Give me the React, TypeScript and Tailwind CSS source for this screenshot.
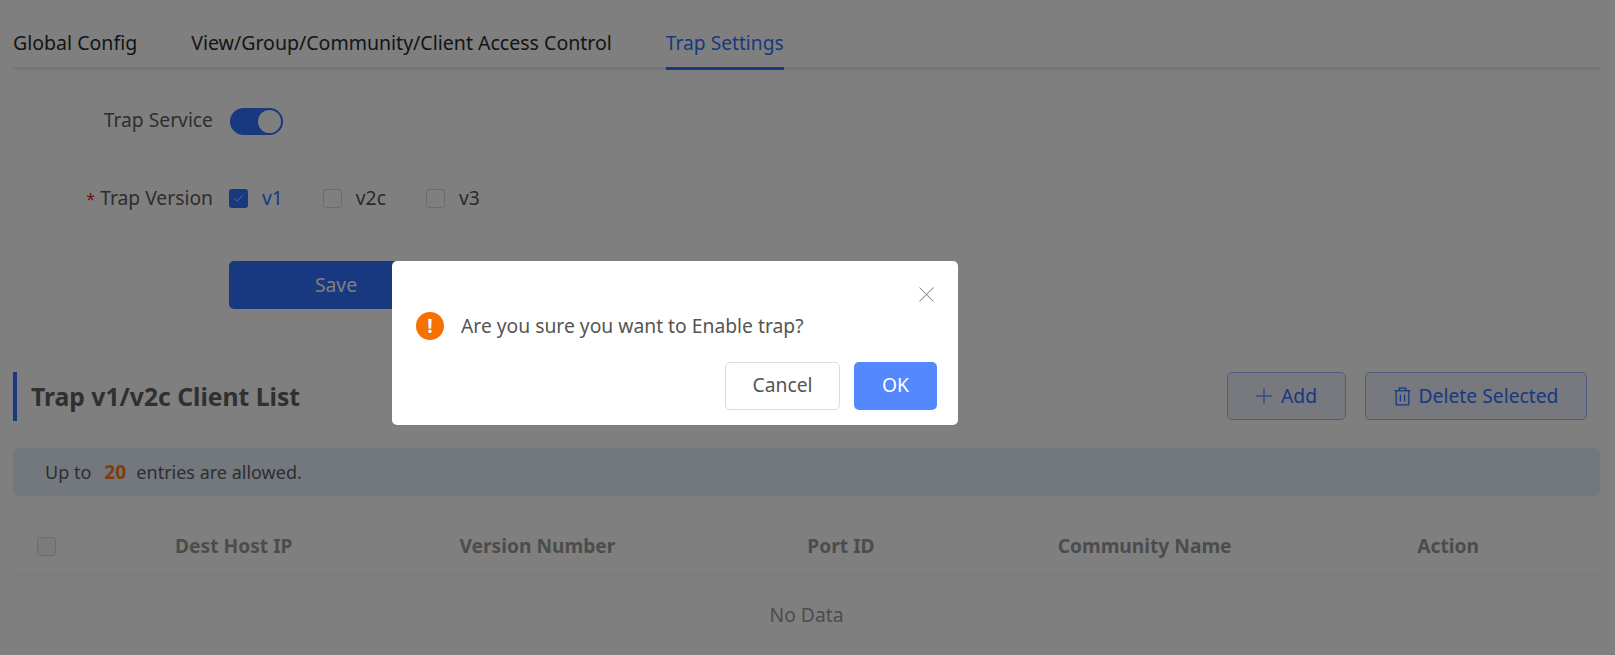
import { Plus, X, Check } from "lucide-react";

const font = "font-['Noto_Sans','Liberation_Sans',sans-serif]";

function Box({ checked, label }: { checked?: boolean; label: string }) {
  return (
    <label className="flex items-center gap-[14px]">
      <span
        className={
          checked
            ? "flex h-[19px] w-[19px] items-center justify-center rounded-[3px] bg-[#3070ff]"
            : "h-[19px] w-[19px] rounded-[3px] border border-[#d9d9d9] bg-white"
        }
      >
        {checked && <Check size={13} strokeWidth={1.25} className="text-white" />}
      </span>
      <span className={checked ? "text-[#3070ff]" : "text-[#555]"}>{label}</span>
    </label>
  );
}

function TrashIcon() {
  return (
    <svg width="17" height="19" viewBox="0 0 16 18" fill="none" stroke="currentColor" strokeWidth="1.2">
      <path d="M0.5 3.5H15.5" />
      <path d="M5 3.5V1H11V3.5" />
      <path d="M2 3.5V17H14V3.5" />
      <path d="M6 7V13.5M10 7V13.5" />
    </svg>
  );
}

export default function App() {
  return (
    <div className={`${font} relative h-[655px] w-[1615px] overflow-hidden bg-white text-[19.3px] text-[#5c5c5c]`}>
      <div className="pl-[13px] pr-[15px]">
        <div className="flex h-[70px] gap-[54px] border-b-[3px] border-[#ecedf0] text-[19.55px] text-[#2a2a2a]">
          <div className="h-[70px] pt-[29px] leading-[28px]">Global Config</div>
          <div className="h-[70px] pt-[29px] leading-[28px]">View/Group/Community/Client Access Control</div>
          <div className="h-[70px] border-b-[3px] border-[#3070ff] pt-[29px] text-[19.2px] leading-[28px] text-[#3070ff]">Trap Settings</div>
        </div>

        <div className="mt-[38px] flex h-[27px] items-center">
          <div className="w-[200px] pb-[3px] text-right">Trap Service</div>
          <div className="ml-[17px] flex h-[27px] w-[53px] items-center justify-end rounded-full bg-[#3070ff] pr-[2px]">
            <span className="h-[23px] w-[23px] rounded-full bg-white" />
          </div>
        </div>

        <div className="mt-[50px] flex h-[27px] items-center">
          <div className="w-[200px] text-right">
            <span className="mr-[5px] text-[16px] text-[#e02020]">*</span>Trap Version
          </div>
          <div className="ml-[16px] flex items-center gap-[40px]">
            <Box checked label="v1" />
            <Box label="v2c" />
            <Box label="v3" />
          </div>
        </div>

        <button className="mt-[49px] ml-[216px] flex h-[48px] w-[214px] items-center justify-center rounded-[5px] bg-[#3070ff] text-white">
          Save
        </button>

        <div className="mt-[63px] flex h-[48px] items-center justify-between pr-[13px]">
          <h2 className="flex h-[49px] items-center border-l-4 border-[#3070ff] pl-[14px] pt-[2px] text-[24.7px] font-bold text-[#606060]">
            Trap v1/v2c Client List
          </h2>
          <div className="flex gap-[19px]">
            <button className="flex h-[48px] w-[119px] items-center justify-center gap-[4px] rounded-[5px] border border-[#9db8ff] bg-[#eef3ff] pr-[5px] text-[#3070ff]">
              <Plus size={26} strokeWidth={0.9} /> Add
            </button>
            <button className="flex h-[48px] w-[222px] items-center justify-center gap-[8px] rounded-[5px] border border-[#9db8ff] bg-[#eef3ff] text-[#3070ff]">
              <TrashIcon /> Delete Selected
            </button>
          </div>
        </div>

        <div className="mt-[28px] flex h-[48px] items-center rounded-[5px] bg-[#e6f0ff] pl-[32px] text-[18px]">
          Up to <b className="ml-[13px] mr-[10px] text-[19.3px] text-[#ff7a1a]">20</b> entries are allowed.
        </div>

        <div className="mt-[22px]">
          <div className="grid h-[57px] grid-cols-[69px_repeat(5,1fr)] items-center border-b border-[#f0f0f0] text-center text-[19.2px] font-bold text-[#999]">
            <span className="ml-[24px] h-[19px] w-[19px] rounded-[3px] border border-[#d9d9d9] bg-[#f5f7ff]" />
            <div>Dest Host IP</div>
            <div>Version Number</div>
            <div>Port ID</div>
            <div>Community Name</div>
            <div>Action</div>
          </div>
          <div className="pt-[26px] text-center leading-[28px] text-[#999]">No Data</div>
        </div>
      </div>

      {/* modal overlay */}
      <div className="absolute inset-0 bg-black/50" />
      <div className="absolute left-[392px] top-[261px] h-[164px] w-[566px] rounded-[5px] bg-white pl-[24px] pr-[21px] pt-[51px]">
        <X size={27} strokeWidth={0.9} className="absolute right-[18px] top-[20px] text-[#888]" />
        <div className="flex items-center gap-[17px]">
          <span className="flex h-[28px] w-[28px] items-center justify-center rounded-full bg-[#f57200] text-[19px] font-bold leading-none text-white">!</span>
          <span className="text-[#555]">Are you sure you want to Enable trap?</span>
        </div>
        <div className="mt-[21px] flex justify-end gap-[14px]">
          <button className="h-[48px] w-[115px] rounded-[5px] border border-[#ddd] bg-white text-[#555]">Cancel</button>
          <button className="h-[48px] w-[83px] rounded-[5px] bg-[#5588ff] text-white">OK</button>
        </div>
      </div>
    </div>
  );
}
